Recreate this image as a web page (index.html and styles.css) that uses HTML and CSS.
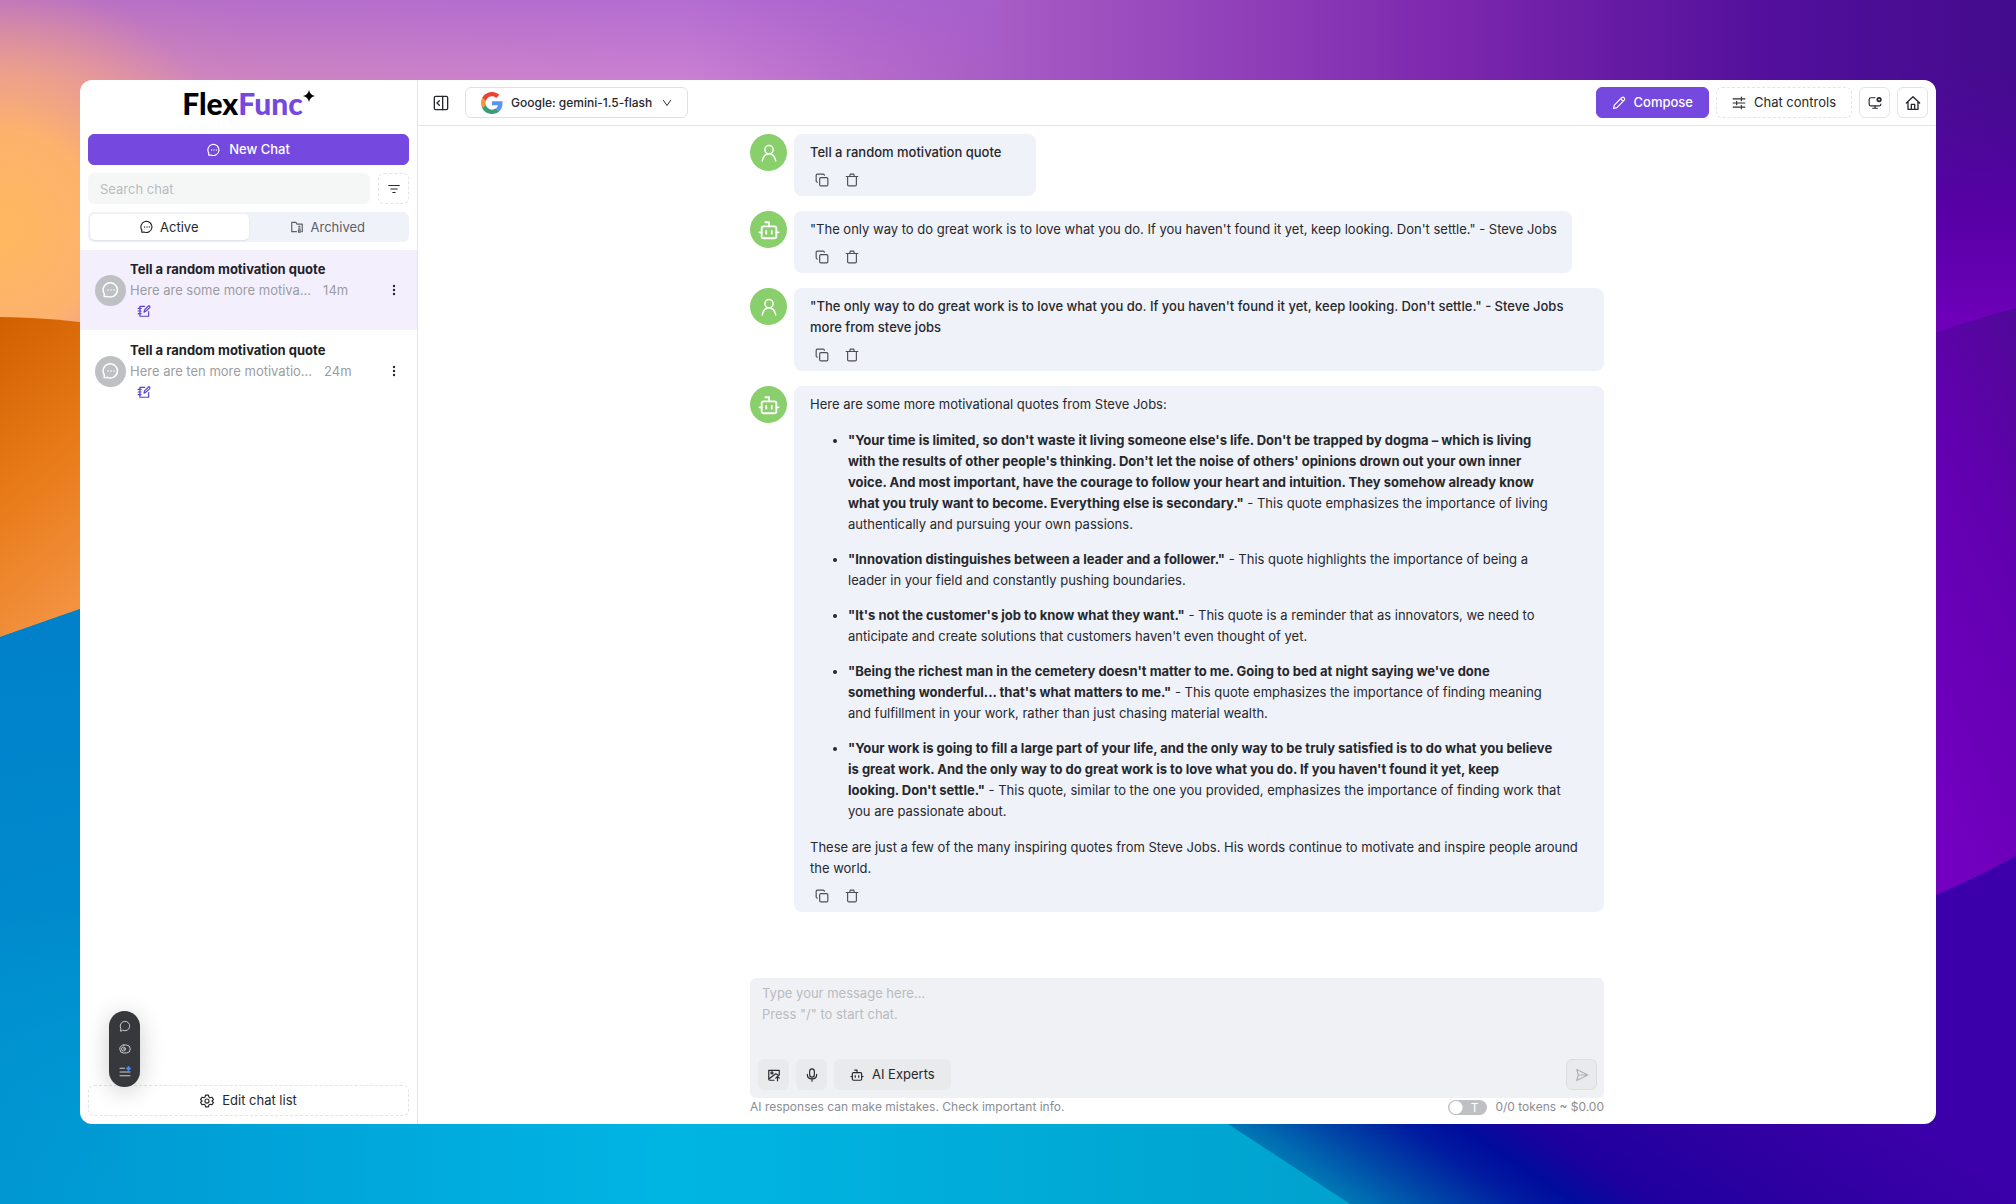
FILE: index.html
```html
<!DOCTYPE html>
<html lang="en">
<head>
  <meta charset="UTF-8">
  <meta name="viewport" content="width=device-width, initial-scale=1">
  <title>FlexFunc</title>
  <link rel="stylesheet" href="styles.css">
</head>
<body>

  <!-- icon set -->
  <svg class="sprite" aria-hidden="true">
    <symbol id="i-chat" viewBox="0 0 24 24"><path d="M3 21v-4a9.500 9.500 0 1 1 4 3.500z"/><path d="M8 12h.01M12 12h.01M16 12h.01" stroke-width="2.200"/></symbol>
    <symbol id="i-filter" viewBox="0 0 24 24"><path d="M3 6h18M6.500 12h11M10 18h4"/></symbol>
    <symbol id="i-archive" viewBox="0 0 24 24"><path d="M11 20H3V4h7l2 3h9v13h-1"/><path d="M15 11h2M15 14h2M14.500 17h3v4h-3z"/></symbol>
    <symbol id="i-note" viewBox="0 0 24 24"><path d="M13 4H5v17h15v-8"/><path d="M2 7.500h5M2 12h5M2 16.500h5"/><path d="M12 14l1-4 7-7c3 0 2.500 2.500 1 4l-5 4.500z"/></symbol>
    <symbol id="i-dots" viewBox="0 0 24 24"><g fill="currentColor" stroke="none"><circle cx="12" cy="4" r="2.400"/><circle cx="12" cy="12" r="2.400"/><circle cx="12" cy="20" r="2.400"/></g></symbol>
    <symbol id="i-gear" viewBox="0 0 24 24"><circle cx="12" cy="12" r="3.500"/><path d="M9.500 2h5l.8 3.300 2 1.200 3.300-1 2.400 4.200-2.400 2.300 2.400 2.300-2.400 4.200-3.300-1-2 1.200-.8 3.300h-5l-.8-3.300-2-1.200-3.300 1L1 14.300 3.400 12 1 9.700l2.400-4.200 3.300 1 2-1.200z"/></symbol>
    <symbol id="i-panel" viewBox="0 0 24 24"><rect x="2" y="2" width="20" height="20" rx="2"/><path d="M14.500 2v20M9.500 8.500L6 12l3.500 3.500"/></symbol>
    <symbol id="i-down" viewBox="0 0 24 24"><path d="M5 7l7 10 7-10"/></symbol>
    <symbol id="i-pencil" viewBox="0 0 24 24"><path d="M2.500 21.500l1.500-6L17 2.500c3-1.500 5.500 1.500 4.500 4L8.500 20zM15 5l4 4"/></symbol>
    <symbol id="i-sliders" viewBox="0 0 24 24"><path d="M2 5h12M18 5h4M16 2v6M2 12h4M10 12h12M8 9v6M2 19h12M18 19h4M16 16v6"/></symbol>
    <symbol id="i-monitor" viewBox="0 0 24 24"><path d="M12 3H5a3 3 0 0 0-3 3v8a3 3 0 0 0 3 3h14a3 3 0 0 0 3-3M12 17v4M8 21h8"/><circle cx="19" cy="6" r="3" stroke-width="3"/></symbol>
    <symbol id="i-home" viewBox="0 0 24 24"><path d="M2 12L12 2.500 22 12M4.500 10v11.500h15V10M9.500 21v-7h5v7"/></symbol>
    <symbol id="i-user" viewBox="0 0 24 24"><circle cx="12" cy="7.500" r="5.500"/><path d="M3 22.500c1-5 4-9.500 9-9.500s8 4.500 9 9.500"/></symbol>
    <symbol id="i-robot" viewBox="0 0 24 24"><rect x="4" y="8" width="16" height="13" rx="2"/><path d="M8 3.500h4V8M1.500 14.500H4M20 14.500h2.500M9 13v3M15 13v3"/></symbol>
    <symbol id="i-copy" viewBox="0 0 24 24"><rect x="8" y="8" width="14" height="14" rx="2"/><path d="M4 15.500a2 2 0 0 1-2-2V4a2 2 0 0 1 2-2h10a2 2 0 0 1 2 2"/></symbol>
    <symbol id="i-trash" viewBox="0 0 24 24"><path d="M2 6h20M4.500 6v14a2 2 0 0 0 2 2h11a2 2 0 0 0 2-2V6M8 6l1-4h6l1 4"/></symbol>
    <symbol id="i-image" viewBox="0 0 24 24"><path d="M12 21H5a2 2 0 0 1-2-2V4h18v8M3 19L15 10l5 3"/><circle cx="8.500" cy="8.500" r="1.800"/><path d="M18 22v-7M15 17.500l3-3 3 3"/></symbol>
    <symbol id="i-mic" viewBox="0 0 24 24"><rect x="8" y="1.500" width="8" height="14" rx="4"/><path d="M4 11c0 10 16 10 16 0M12 18.500v4"/></symbol>
    <symbol id="i-send" viewBox="0 0 24 24"><path d="M3 2.500L22 12 3 21.500 5.500 12zM5.500 12H20"/></symbol>
    <symbol id="i-bubble" viewBox="0 0 24 24"><path d="M3.500 22v-5.500A9.500 9.500 0 1 1 8 20.800z"/></symbol>
    <symbol id="i-switch" viewBox="0 0 24 24"><rect x="1.500" y="4" width="21" height="16" rx="8"/><circle cx="9" cy="12" r="4"/><path d="M9 12h3"/></symbol>
    <symbol id="i-list" viewBox="0 0 24 24"><path d="M2 4.500h9M2 12h20M2 19.500h20"/><path d="M19 0l2 3 3 2-3 2-2 3-2-3-3-2 3-2z" fill="#4a8cf7" stroke="#4a8cf7" stroke-width="1"/></symbol>
  </svg>

  <svg class="wallpaper" viewBox="0 0 2016 1204" preserveAspectRatio="none" aria-hidden="true">
    <defs>
      <linearGradient id="sky" x1="0" x2="1" y1="0" y2="0">
        <stop offset="0" stop-color="#dc8fa9"/>
        <stop offset=".12" stop-color="#cd84c0"/>
        <stop offset=".34" stop-color="#ca80d2"/>
        <stop offset=".5" stop-color="#a75bc4"/>
        <stop offset=".72" stop-color="#7c27ae"/>
        <stop offset=".88" stop-color="#520f9b"/>
        <stop offset="1" stop-color="#430b8d"/>
      </linearGradient>
      <linearGradient id="haze" x1="0" x2="0" y1="0" y2="1">
        <stop offset="0" stop-color="#a45fd0" stop-opacity=".6"/>
        <stop offset="1" stop-color="#a45fd0" stop-opacity="0"/>
      </linearGradient>
      <radialGradient id="peach" gradientUnits="userSpaceOnUse" cx="0" cy="230" r="250">
        <stop offset="0" stop-color="#ffb85f"/>
        <stop offset=".4" stop-color="#fdb26d"/>
        <stop offset="1" stop-color="#f0a08a" stop-opacity="0"/>
      </radialGradient>
      <linearGradient id="dune" x1="0" x2=".3" y1="0" y2="1">
        <stop offset="0" stop-color="#d16000"/>
        <stop offset=".5" stop-color="#e87a17"/>
        <stop offset="1" stop-color="#f39343"/>
      </linearGradient>
      <linearGradient id="sea" x1="0" x2="1" y1="0" y2="0">
        <stop offset="0" stop-color="#0097d2"/>
        <stop offset=".5" stop-color="#00b5e3"/>
        <stop offset="1" stop-color="#00a2cd"/>
      </linearGradient>
      <linearGradient id="depth" x1="0" x2="0" y1="0" y2="1">
        <stop offset="0" stop-color="#0080ca"/>
        <stop offset=".5" stop-color="#0085cb" stop-opacity=".8"/>
        <stop offset="1" stop-color="#0097d2" stop-opacity="0"/>
      </linearGradient>
      <linearGradient id="night" gradientUnits="userSpaceOnUse" x1="1290" x2="1492" y1="1164" y2="856">
        <stop offset="0" stop-color="#0078b5"/>
        <stop offset=".12" stop-color="#004ba8"/>
        <stop offset=".26" stop-color="#001ba0"/>
        <stop offset=".34" stop-color="#000c9c"/>
        <stop offset=".45" stop-color="#1e009f"/>
        <stop offset=".7" stop-color="#2e00a1"/>
        <stop offset="1" stop-color="#3b00a9"/>
      </linearGradient>
      <linearGradient id="rise" x1="0" x2="0" y1="0" y2="1">
        <stop offset="0" stop-color="#4f089b" stop-opacity="0"/>
        <stop offset=".5" stop-color="#5700a6"/>
        <stop offset="1" stop-color="#7600bf"/>
      </linearGradient>
      <linearGradient id="violet" x1="1" x2=".6" y1="0" y2="1">
        <stop offset="0" stop-color="#500897"/>
        <stop offset=".4" stop-color="#6200b0"/>
        <stop offset="1" stop-color="#7300c1"/>
      </linearGradient>
    </defs>
    <path fill="url(#sky)" d="M0 0h2016v400H0z"/>
    <path fill="url(#haze)" d="M0 0h1000v80H0z"/>
    <path fill="url(#peach)" d="M0 0h260v400H0z"/>
    <path fill="url(#dune)" d="M0 317q50 0 120 10v320H0z"/>
    <path fill="url(#rise)" d="M1900 60h116v300h-116z"/>
    <path fill="url(#violet)" d="M1900 345q60-22 116-37v600h-116z"/>
    <path fill="url(#night)" d="M1100 1050l800-140q70-28 116-54v348H1100z"/>
    <path fill="url(#sea)" d="M0 637l120-42 1060 498 48 31 122 80H0z"/>
    <path fill="url(#depth)" d="M0 637l120-42v609H0z"/>
  </svg>

  <div class="window">

    <aside class="sidebar">
      <div class="logo">
        <span class="logo-flex">Flex</span><span class="logo-func">Func</span>
        <svg class="logo-star" viewBox="0 0 24 24"><path d="M12 0c1.500 7 5 10.500 12 12-7 1.500-10.500 5-12 12-1.500-7-5-10.500-12-12 7-1.500 10.500-5 12-12z"/></svg>
      </div>

      <button class="btn btn-primary" type="button"><svg class="icon"><use href="#i-chat"/></svg>New Chat</button>

      <div class="search-row">
        <input class="search" type="search" placeholder="Search chat" aria-label="Search chat">
        <button class="btn btn-dashed btn-square" type="button" aria-label="Filter"><svg class="icon"><use href="#i-filter"/></svg></button>
      </div>

      <div class="tabs" role="tablist">
        <button class="tab tab-active" type="button" role="tab" aria-selected="true"><svg class="icon"><use href="#i-chat"/></svg>Active</button>
        <button class="tab" type="button" role="tab" aria-selected="false"><svg class="icon"><use href="#i-archive"/></svg>Archived</button>
      </div>

      <ul class="chat-list">
        <li class="chat chat-selected">
          <span class="chat-avatar"><svg class="icon-lg"><use href="#i-chat"/></svg></span>
          <div class="chat-text">
            <strong class="chat-title">Tell a random motivation quote</strong>
            <span class="chat-preview"><span>Here are some more motiva...</span><span>14m</span></span>
            <svg class="icon chat-note"><use href="#i-note"/></svg>
          </div>
          <button class="icon-btn" type="button" aria-label="Chat menu"><svg class="icon-sm"><use href="#i-dots"/></svg></button>
        </li>
        <li class="chat">
          <span class="chat-avatar"><svg class="icon-lg"><use href="#i-chat"/></svg></span>
          <div class="chat-text">
            <strong class="chat-title">Tell a random motivation quote</strong>
            <span class="chat-preview"><span>Here are ten more motivatio...</span><span>24m</span></span>
            <svg class="icon chat-note"><use href="#i-note"/></svg>
          </div>
          <button class="icon-btn" type="button" aria-label="Chat menu"><svg class="icon-sm"><use href="#i-dots"/></svg></button>
        </li>
      </ul>

      <button class="btn btn-dashed" type="button"><svg class="icon"><use href="#i-gear"/></svg>Edit chat list</button>
    </aside>

    <main class="main">
      <header class="topbar">
        <button class="icon-btn" type="button" aria-label="Collapse sidebar"><svg class="icon-md"><use href="#i-panel"/></svg></button>
        <label class="model">
          <svg class="google" viewBox="0 0 48 48">
            <path fill="#ea4335" d="M24 9.500c3.540 0 6.710 1.220 9.210 3.600l6.850-6.850C35.900 2.380 30.470 0 24 0 14.620 0 6.510 5.380 2.560 13.220l7.980 6.190C12.430 13.720 17.740 9.500 24 9.500z"/>
            <path fill="#5a94f2" d="M46.980 24.550c0-1.570-.15-3.090-.38-4.550H24v9.020h12.940c-.58 2.960-2.260 5.480-4.780 7.180l7.730 6c4.510-4.180 7.090-10.360 7.090-17.650z"/>
            <path fill="#f9903a" d="M10.530 28.590c-.48-1.450-.76-2.990-.76-4.590s.27-3.140.76-4.590l-7.980-6.190C.92 16.460 0 20.120 0 24c0 3.880.92 7.540 2.560 10.780l7.970-6.190z"/>
            <path fill="#3a9d76" d="M24 48c6.480 0 11.930-2.130 15.890-5.810l-7.730-6c-2.150 1.450-4.920 2.300-8.160 2.300-6.260 0-11.570-4.220-13.470-9.910l-7.980 6.190C6.510 42.620 14.620 48 24 48z"/>
          </svg>
          <select class="model-select" aria-label="Model"><option>Google: gemini-1.5-flash</option></select>
          <svg class="icon-sm"><use href="#i-down"/></svg>
        </label>
        <div class="topbar-actions">
          <button class="btn btn-primary" type="button"><svg class="icon"><use href="#i-pencil"/></svg>Compose</button>
          <button class="btn btn-dashed" type="button"><svg class="icon"><use href="#i-sliders"/></svg>Chat controls</button>
          <button class="btn btn-square" type="button" aria-label="Display settings"><svg class="icon"><use href="#i-monitor"/></svg></button>
          <button class="btn btn-square" type="button" aria-label="Home"><svg class="icon-md"><use href="#i-home"/></svg></button>
        </div>
      </header>

      <section class="messages">
        <article class="message message-user">
          <span class="avatar"><svg class="icon-lg"><use href="#i-user"/></svg></span>
          <div class="bubble">
            <p>Tell a random motivation quote</p>
            <div class="bubble-actions">
              <button class="icon-btn" type="button" aria-label="Copy"><svg class="icon"><use href="#i-copy"/></svg></button>
              <button class="icon-btn" type="button" aria-label="Delete"><svg class="icon"><use href="#i-trash"/></svg></button>
            </div>
          </div>
        </article>

        <article class="message">
          <span class="avatar"><svg class="icon-xl"><use href="#i-robot"/></svg></span>
          <div class="bubble">
            <p>"The only way to do great work is to love what you do. If you haven't found it yet, keep looking. Don't settle." - Steve Jobs</p>
            <div class="bubble-actions">
              <button class="icon-btn" type="button" aria-label="Copy"><svg class="icon"><use href="#i-copy"/></svg></button>
              <button class="icon-btn" type="button" aria-label="Delete"><svg class="icon"><use href="#i-trash"/></svg></button>
            </div>
          </div>
        </article>

        <article class="message message-user">
          <span class="avatar"><svg class="icon-lg"><use href="#i-user"/></svg></span>
          <div class="bubble bubble-wide">
            <p>"The only way to do great work is to love what you do. If you haven't found it yet, keep looking. Don't settle." - Steve Jobs<br>more from steve jobs</p>
            <div class="bubble-actions">
              <button class="icon-btn" type="button" aria-label="Copy"><svg class="icon"><use href="#i-copy"/></svg></button>
              <button class="icon-btn" type="button" aria-label="Delete"><svg class="icon"><use href="#i-trash"/></svg></button>
            </div>
          </div>
        </article>

        <article class="message">
          <span class="avatar"><svg class="icon-xl"><use href="#i-robot"/></svg></span>
          <div class="bubble bubble-wide">
            <p>Here are some more motivational quotes from Steve Jobs:</p>
            <ul class="quotes">
              <li><strong>"Your time is limited, so don't waste it living someone else's life. Don't be trapped by dogma – which is living<br>with the results of other people's thinking. Don't let the noise of others' opinions drown out your own inner<br>voice. And most important, have the courage to follow your heart and intuition. They somehow already know<br>what you truly want to become. Everything else is secondary."</strong> - This quote emphasizes the importance of living<br>authentically and pursuing your own passions.</li>
              <li><strong>"Innovation distinguishes between a leader and a follower."</strong> - This quote highlights the importance of being a<br>leader in your field and constantly pushing boundaries.</li>
              <li><strong>"It's not the customer's job to know what they want."</strong> - This quote is a reminder that as innovators, we need to<br>anticipate and create solutions that customers haven't even thought of yet.</li>
              <li><strong>"Being the richest man in the cemetery doesn't matter to me. Going to bed at night saying we've done<br>something wonderful... that's what matters to me."</strong> - This quote emphasizes the importance of finding meaning<br>and fulfillment in your work, rather than just chasing material wealth.</li>
              <li><strong>"Your work is going to fill a large part of your life, and the only way to be truly satisfied is to do what you believe<br>is great work. And the only way to do great work is to love what you do. If you haven't found it yet, keep<br>looking. Don't settle."</strong> - This quote, similar to the one you provided, emphasizes the importance of finding work that<br>you are passionate about.</li>
            </ul>
            <p>These are just a few of the many inspiring quotes from Steve Jobs. His words continue to motivate and inspire people around<br>the world.</p>
            <div class="bubble-actions">
              <button class="icon-btn" type="button" aria-label="Copy"><svg class="icon"><use href="#i-copy"/></svg></button>
              <button class="icon-btn" type="button" aria-label="Delete"><svg class="icon"><use href="#i-trash"/></svg></button>
            </div>
          </div>
        </article>
      </section>

      <footer class="footer">
        <form class="composer">
          <textarea class="composer-input" rows="3" aria-label="Message" placeholder="Type your message here...&#10;Press &quot;/&quot; to start chat."></textarea>
          <div class="composer-tools">
            <button class="btn btn-soft btn-square" type="button" aria-label="Add image"><svg class="icon"><use href="#i-image"/></svg></button>
            <button class="btn btn-soft btn-square" type="button" aria-label="Voice input"><svg class="icon"><use href="#i-mic"/></svg></button>
            <button class="btn btn-soft" type="button"><svg class="icon"><use href="#i-robot"/></svg>AI Experts</button>
            <button class="btn btn-square btn-send" type="submit" aria-label="Send" disabled><svg class="icon"><use href="#i-send"/></svg></button>
          </div>
        </form>
        <div class="status">
          <span>AI responses can make mistakes. Check important info.</span>
          <label class="tokens"><span class="toggle"><input type="checkbox" class="toggle-input"><span class="toggle-mark">T</span></span>0/0 tokens ~ $0.00</label>
        </div>
      </footer>
    </main>

    <nav class="float-menu" aria-label="Quick tools">
      <button class="float-btn" type="button" aria-label="Chat"><svg class="icon-sm"><use href="#i-bubble"/></svg></button>
      <button class="float-btn" type="button" aria-label="Toggle"><svg class="icon-sm"><use href="#i-switch"/></svg></button>
      <button class="float-btn" type="button" aria-label="List"><svg class="icon-sm"><use href="#i-list"/></svg></button>
    </nav>
  </div>

</body>
</html>
```

FILE: styles.css
```css
* {
  box-sizing: border-box;
}
body {
  margin: 0;
  height: 100vh;
  padding: 80px;
  display: flex;
  font-family: Inter, 'Liberation Sans', sans-serif;
  font-size: 13px;
  line-height: 21px;
  color: #26282c;
  background-color: #3c00a9;
}
button, input, textarea, select {
  font: inherit;
  color: inherit;
}
button {
  cursor: pointer;
}
p, ul {
  margin: 0;
}
svg {
  flex: none;
  fill: none;
  stroke: currentColor;
  stroke-width: 2;
  stroke-linecap: round;
  stroke-linejoin: round;
}
.sprite {
  position: absolute;
  width: 0;
  height: 0;
}
.wallpaper {
  position: absolute;
  inset: 0;
  width: 100%;
  height: 100%;
  stroke: none;
}
.icon-sm {
  width: 12px;
  height: 12px;
}
.icon {
  width: 14px;
  height: 14px;
}
.icon-md {
  width: 16px;
  height: 16px;
}
.icon-lg {
  width: 18px;
  height: 18px;
}
.icon-xl {
  width: 22px;
  height: 22px;
}
.window {
  position: relative;
  flex: 1;
  display: flex;
  min-width: 0;
  background: #fff;
  border-radius: 12px;
  overflow: hidden;
}

/* buttons */
.btn {
  display: flex;
  align-items: center;
  justify-content: center;
  gap: 8px;
  height: 31px;
  flex: none;
  padding: 0 15px;
  border: 1px solid #e3e4e7;
  border-radius: 6px;
  background: #fff;
}
.btn-primary {
  border-color: #7549e0;
  background: #7549e0;
  color: #fff;
  font-weight: 500;
}
.btn-dashed {
  border-style: dashed;
}
.btn-square {
  width: 31px;
  padding: 0;
}
.btn-soft {
  border-color: #e9eaec;
  background: #e9eaec;
}
.icon-btn {
  display: flex;
  align-items: center;
  justify-content: center;
  width: 24px;
  height: 24px;
  padding: 0;
  border: 0;
  background: none;
}

/* sidebar */
.sidebar {
  display: flex;
  flex-direction: column;
  gap: 8px;
  width: 338px;
  flex: none;
  padding: 0 8px 8px;
  border-right: 1px solid #e3e4e7;
}
.logo {
  display: flex;
  align-items: center;
  justify-content: center;
  height: 46px;
  font-family: Lato, sans-serif;
  font-size: 30px;
  font-weight: 900;
}
.logo-flex {
  color: #000;
}
.logo-func {
  color: #7549e0;
}
.logo-star {
  width: 12px;
  height: 12px;
  margin-bottom: 14px;
  fill: #000;
  stroke: none;
}
.search-row {
  display: flex;
  gap: 8px;
}
.search {
  flex: 1;
  min-width: 0;
  height: 31px;
  padding: 0 12px;
  border: 0;
  border-radius: 6px;
  background: #f5f7f7;
}
.search::placeholder, .composer-input::placeholder {
  color: #b9bbbf;
}
.tabs {
  display: flex;
  height: 30px;
  padding: 2px;
  border-radius: 6px;
  background: #f0f2fa;
}
.tab {
  display: flex;
  flex: 1;
  align-items: center;
  justify-content: center;
  gap: 6px;
  border: 0;
  border-radius: 5px;
  background: none;
  color: #5d6066;
}
.tab-active {
  background: #fff;
  color: #26282c;
  box-shadow: 0 1px 2px rgba(0, 0, 0, 0.08);
}
.chat-list {
  flex: 1;
  margin: 0 -8px;
  padding: 0;
  list-style: none;
}
.chat {
  display: flex;
  align-items: center;
  height: 80px;
  margin-bottom: 1px;
  padding: 0 11px 0 15px;
}
.chat-selected {
  background: #f4effd;
}
.chat-avatar {
  display: flex;
  align-items: center;
  justify-content: center;
  width: 31px;
  height: 31px;
  margin-right: 4px;
  border-radius: 50%;
  background: #bfc0c3;
  color: #fff;
}
.chat-text {
  display: flex;
  flex: 1;
  flex-direction: column;
}
.chat-title {
  font-weight: 700;
  color: #202226;
}
.chat-preview {
  display: flex;
  gap: 12px;
  color: #9b9da2;
}
.chat-note {
  margin: 3px 7px 4px;
  color: #5b3fd0;
}

/* main area */
.main {
  display: flex;
  flex: 1;
  flex-direction: column;
  min-width: 0;
}
.topbar {
  display: flex;
  align-items: center;
  gap: 12px;
  height: 46px;
  flex: none;
  padding: 0 8px 0 11px;
  border-bottom: 1px solid #e3e4e7;
}
.model {
  display: flex;
  align-items: center;
  gap: 8px;
  height: 31px;
  padding: 0 14px 0 15px;
  border: 1px solid #dfe0e4;
  border-radius: 6px;
  font-size: 12px;
}
.google {
  width: 22px;
  height: 22px;
  stroke: none;
}
.model-select {
  padding: 0;
  border: 0;
  background: none;
  font-weight: 500;
  appearance: none;
}
.topbar-actions {
  display: flex;
  gap: 7px;
  margin-left: auto;
}
.messages {
  display: flex;
  flex: 1;
  flex-direction: column;
  gap: 15px;
  min-height: 0;
  width: 100%;
  max-width: 854px;
  margin: 0 auto;
  padding-top: 8px;
}
.message {
  display: flex;
  align-items: flex-start;
  gap: 7px;
}
.message-user {
  font-weight: 500;
}
.avatar {
  display: flex;
  align-items: center;
  justify-content: center;
  flex: none;
  width: 37px;
  height: 37px;
  border-radius: 50%;
  background: #89cf6b;
  color: #fff;
}
.bubble {
  min-width: 242px;
  padding: 8px 15px 4px 16px;
  border-radius: 8px;
  background: #f0f2fa;
}
.bubble-wide {
  flex: 1;
}
.bubble-actions {
  display: flex;
  gap: 7px;
  margin-top: 5px;
  color: #4c4f55;
}
.bubble-actions .icon-btn {
  width: 23px;
}
.quotes {
  display: flex;
  flex-direction: column;
  gap: 14px;
  margin: 15px 0;
  padding-left: 38px;
}
.quotes strong {
  font-weight: 700;
}

/* composer */
.footer {
  width: 100%;
  max-width: 854px;
  margin: 0 auto;
  padding-bottom: 8px;
}
.composer {
  display: flex;
  flex-direction: column;
  gap: 13px;
  padding: 5px 7px 8px 8px;
  border-radius: 6px;
  background: #f0f1f5;
}
.composer-input {
  display: block;
  width: 100%;
  padding: 0 4px;
  border: 0;
  outline: 0;
  resize: none;
  background: none;
}
.composer-tools {
  display: flex;
  gap: 7px;
}
.btn-send {
  margin-left: auto;
  border-color: #dcdddf;
  background: #e9eaec;
  color: #aeb0b5;
}
.status {
  display: flex;
  justify-content: space-between;
  height: 18px;
  font-size: 12px;
  line-height: 17px;
  color: #8b8d93;
}
.tokens {
  display: flex;
  gap: 8px;
}
.toggle {
  position: relative;
  display: flex;
  padding-top: 2px;
}
.toggle-input {
  width: 39px;
  height: 15px;
  margin: 0;
  border-radius: 8px;
  background: radial-gradient(circle at 8px 50%, #fff 6px, #bfc0c4 7px);
  appearance: none;
}
.toggle-mark {
  position: absolute;
  right: 9px;
  top: 1px;
  color: #fff;
}

/* floating tool pill */
.float-menu {
  position: absolute;
  left: 29px;
  bottom: 37px;
  display: flex;
  flex-direction: column;
  align-items: center;
  gap: 7px;
  width: 31px;
  padding: 7px 0;
  border-radius: 16px;
  background: #37383b;
  box-shadow: 0 4px 24px rgba(0, 0, 0, 0.2);
}
.float-btn {
  display: flex;
  padding: 2px;
  border: 0;
  background: none;
  color: #c9cacd;
}
```
